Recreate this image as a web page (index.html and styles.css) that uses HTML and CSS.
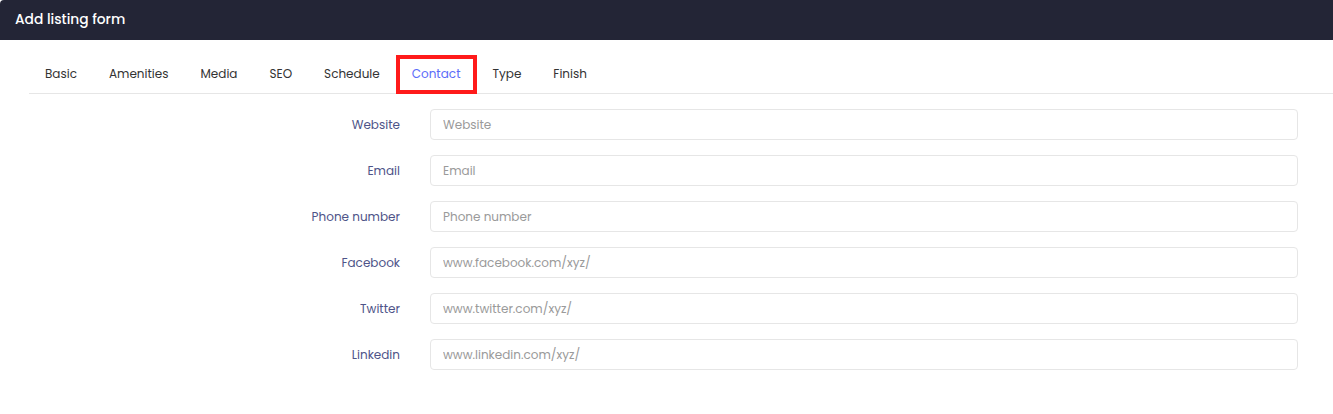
FILE: index.html
```html
<!DOCTYPE html>
<html>
<head>
<meta charset="utf-8">
<link rel="stylesheet" href="styles.css">
</head>
<body>
<div class="card">
  <div class="card-header">Add listing form</div>
  <div class="card-body">
    <ul class="tabs">
      <li class="tab">Basic</li>
      <li class="tab">Amenities</li>
      <li class="tab">Media</li>
      <li class="tab">SEO</li>
      <li class="tab">Schedule</li>
      <li class="tab active">Contact</li>
      <li class="tab">Type</li>
      <li class="tab">Finish</li>
    </ul>
    <form class="form">
      <label class="label">Website</label>
      <input class="input" type="text" placeholder="Website">
      <label class="label">Email</label>
      <input class="input" type="text" placeholder="Email">
      <label class="label">Phone number</label>
      <input class="input" type="text" placeholder="Phone number">
      <label class="label">Facebook</label>
      <input class="input" type="text" placeholder="www.facebook.com/xyz/">
      <label class="label">Twitter</label>
      <input class="input" type="text" placeholder="www.twitter.com/xyz/">
      <label class="label">Linkedin</label>
      <input class="input" type="text" placeholder="www.linkedin.com/xyz/">
    </form>
  </div>
</div>
</body>
</html>
```

FILE: styles.css
```css
* { box-sizing: border-box; }
html, body {
  margin: 0;
  padding: 0;
  background: #fff;
  font-family: Poppins, "Open Sans", "Liberation Sans", sans-serif;
}
.card {
  width: 1333px;
}
.card-header {
  height: 40px;
  background: #232536;
  color: #fff;
  font-size: 13.8px;
  font-weight: 500;
  line-height: 40px;
  padding-left: 15px;
  border-top-left-radius: 4px;
}
.card-body {
  padding: 15px 0 0 29px;
}
.tabs {
  list-style: none;
  margin: 0;
  padding: 0;
  display: flex;
  height: 39px;
  border-bottom: 1px solid #e6e6e6;
}
.tab {
  position: relative;
  padding: 0 16px;
  height: 38px;
  line-height: 38px;
  font-size: 12px;
  color: #333;
}
.tab.active {
  color: #5b6cf9;
}
.tab.active::after {
  content: "";
  position: absolute;
  left: 0;
  top: 0;
  right: 0;
  bottom: -1px;
  border: 4px solid #ff1a1a;
}
.form {
  display: grid;
  grid-template-columns: 371px 1fr;
  column-gap: 30px;
  row-gap: 15px;
  padding: 15px 35px 0 0;
  align-items: center;
}
.label {
  text-align: right;
  font-size: 12px;
  color: #4e5488;
}
.input {
  height: 31px;
  border: 1px solid #e6e6e6;
  border-radius: 4px;
  padding: 0 12px;
  font-family: inherit;
  font-size: 12px;
  color: #333;
  outline: none;
}
.input::placeholder {
  color: #9a9a9a;
}
```
